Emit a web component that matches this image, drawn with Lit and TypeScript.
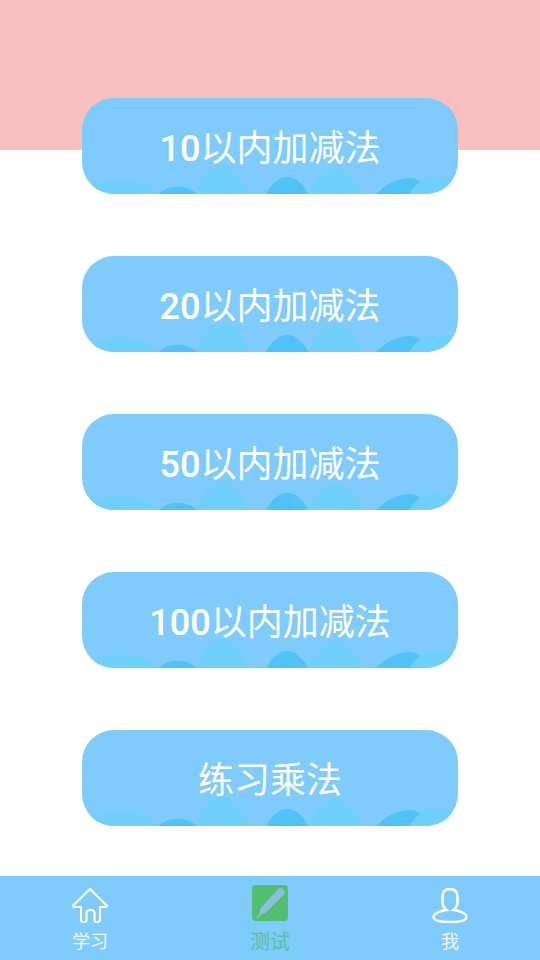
import { LitElement, html, css, svg } from "lit";
import { customElement } from "lit/decorators.js";

const waves = svg`
  <path fill="#6fd0fb" d="M0 96 L6 90 C24 80 56 77 78 96 Z"/>
  <path fill="#50c2f8" d="M77 96 C86 87 104 86 115 96 Z"/>
  <path fill="#6fd0fb" d="M114 96 C119 80 129 67 140 67 C151 67 161 80 166 96 Z"/>
  <path fill="#50c2f8" d="M184 96 C190 85 197 79 205 79 C213 79 221 85 226 96 Z"/>
  <path fill="#6fd0fb" d="M226 96 C232 80 244 69 253 69 C263 69 275 82 281 96 Z"/>
  <path fill="#50c2f8" d="M294 96 C304 86 316 80 328 80 C338 80 344 88 347 96 Z"/>
  <path fill="#6fd0fb" d="M328 96 C332 86 342 80 352 79 C362 79 370 82 376 84 L376 96 Z"/>
`;

@customElement("app-root")
export class AppRoot extends LitElement {
  static styles = css`
    :host {
      display: flex;
      flex-direction: column;
      position: relative;
      width: 540px;
      height: 960px;
      overflow: hidden;
      background: #fff;
      font-family: Roboto, "Noto Sans CJK SC", sans-serif;
    }
    .pink {
      position: absolute;
      left: 0;
      top: 0;
      width: 540px;
      height: 150px;
      background: #f8bfbf;
    }
    .list {
      position: relative;
      flex: 1;
      display: flex;
      flex-direction: column;
      align-items: center;
      gap: 62px;
      padding-top: 98px;
    }
    .btn {
      position: relative;
      box-sizing: border-box;
      width: 376px;
      height: 96px;
      padding-top: 6px;
      border-radius: 32px;
      background: #7fcbfb;
      overflow: hidden;
      display: flex;
      align-items: center;
      justify-content: center;
      flex: none;
    }
    .btn svg {
      position: absolute;
      inset: 0;
      width: 376px;
      height: 96px;
    }
    .btn .txt {
      position: relative;
      color: #fff;
      font-size: 36px;
      line-height: 48px;
      font-weight: 400;
    }
    .btn .num {
      font-weight: 500;
    }
    .tabs {
      height: 84px;
      background: #7fcbfb;
      display: grid;
      grid-template-columns: 1fr 1fr 1fr;
      flex: none;
    }
    .tab {
      display: flex;
      flex-direction: column;
      align-items: center;
      color: #eef8ff;
      font-size: 18px;
      line-height: 24px;
      padding-top: 9px;
    }
    .tab svg {
      width: 40px;
      height: 38px;
      display: block;
    }
    .tab .lbl {
      margin-top: 7px;
    }
    .on {
      color: #58c0a0;
      font-size: 20px;
    }
  `;

  render() {
    const items = [
      ["10", "以内加减法"],
      ["20", "以内加减法"],
      ["50", "以内加减法"],
      ["100", "以内加减法"],
      ["", "练习乘法"],
    ];
    return html`
      <div class="pink"></div>
      <div class="list">
        ${items.map(
          ([n, t]) => html`<div class="btn">
            <svg viewBox="0 0 376 96">${waves}</svg>
            <span class="txt"><span class="num">${n}</span>${t}</span>
          </div>`
        )}
      </div>
      <div class="tabs">
        <div class="tab">
          <svg viewBox="0 0 40 38" fill="none" stroke="#fff" stroke-width="2.100" stroke-linejoin="round" stroke-linecap="round">
            <path d="M20 4 L36.800 20.500 Q37.500 22 36 22 L30 22 L30 35 Q30 37 28 37 L26 37 Q24.500 37 24.500 35 L24.500 28 Q24.500 25 20.500 25 Q16.500 25 16.500 28 L16.500 35 Q16.500 37 15 37 L13 37 Q11 37 11 35 L11 22 L4 22 Q2.500 22 3.200 20.500 Z"/>
          </svg>
          <span class="lbl">学习</span>
        </div>
        <div class="tab on">
          <svg viewBox="0 0 40 38">
            <rect x="2" y="0" width="36" height="36" rx="4" fill="#50c070"/>
            <path fill="#8abde0" d="M28.500 3.500 Q30.500 2.500 32.500 4 L34.500 6 Q35.500 8 34 9.500 L15.500 28 L12 29 L8 33 L7 33.500 L6.500 32.500 L9.500 28.500 L10 24 Z"/>
          </svg>
          <span class="lbl">测试</span>
        </div>
        <div class="tab">
          <svg viewBox="0 0 40 38" fill="none" stroke="#fff" stroke-width="2.500">
            <path d="M20 4 C15 4 12.500 7 12.500 12 L12.500 17 C12.500 20 14 23 16.500 25 C9 26 3.500 29 3.500 32 C3.500 35.500 11 37 20 37 C29 37 36.500 35.500 36.500 32 C36.500 29 31 26 23.500 25 C26 23 27.500 20 27.500 17 L27.500 12 C27.500 7 25 4 20 4 Z"/>
          </svg>
          <span class="lbl">我</span>
        </div>
      </div>
    `;
  }
}
